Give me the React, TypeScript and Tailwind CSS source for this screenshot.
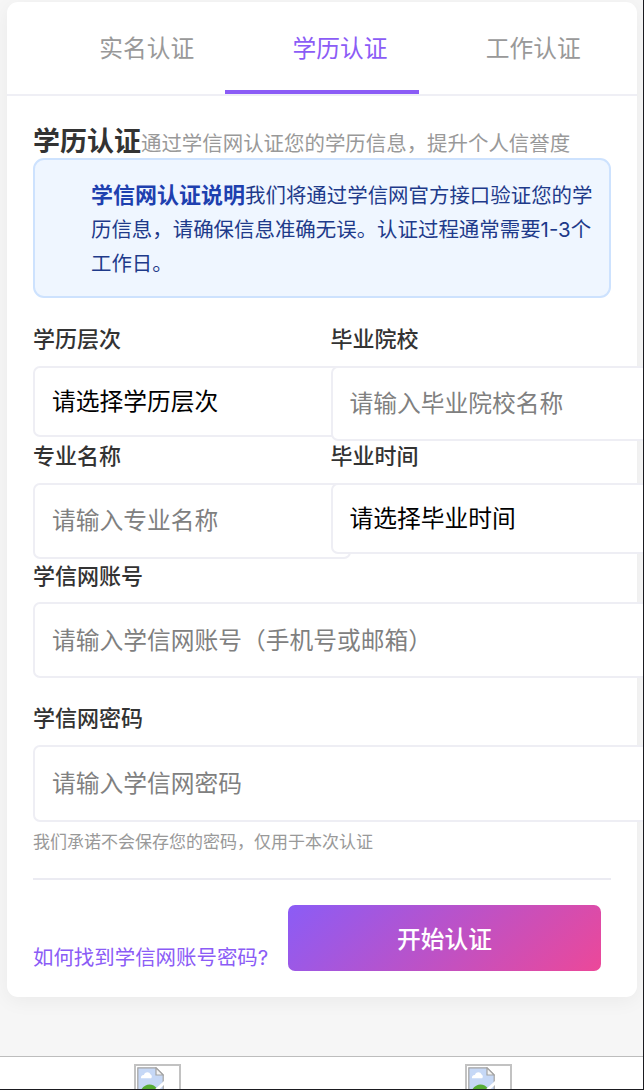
import type { ReactNode } from "react";

type FieldProps = {
  label: string;
  labelClass: string;
  boxClass: string;
  children: ReactNode;
};

const tabs = [
  { label: "实名认证", active: false },
  { label: "学历认证", active: true },
  { label: "工作认证", active: false },
];

const marks = [
  { left: -25, top: 15 },
  { left: 125, top: 275 },
  { left: 275, top: 535 },
  { left: 425, top: 795 },
  { left: 575, top: 1055 },
  { left: -455, top: 955 },
  { left: -305, top: 1215 },
];

function Field({ label, labelClass, boxClass, children }: FieldProps) {
  return (
    <label className="block">
      <span className={`block text-[22px] font-medium text-[#333] ${labelClass}`}>{label}</span>
      <span
        className={`flex items-center rounded-[7px] border-2 border-[#eeeef4] bg-white pl-[17px] text-[23.75px] whitespace-nowrap ${boxClass}`}
      >
        {children}
      </span>
    </label>
  );
}

function BrokenImage() {
  return (
    <div className="h-[47px] w-[47px] shrink-0 border-2 border-[#c2c2c2] pt-px pl-px">
      <svg width="27" height="27" viewBox="0 0 27 27">
        <path d="M.8 .8H19l7.2 7.2V26.2H.8Z" fill="#c6d8f6" stroke="#a3a3a3" strokeWidth="1.2" />
        <path d="M4 11.3a3 3 0 0 1 2.8-3.4 3.6 3.6 0 0 1 6.8-.3 2.7 2.7 0 0 1 .6 3.7Z" fill="#fff" />
        <path d="M3 25.5C6 15.5 18 14 22 25.5Z" fill="#57ad35" />
        <path d="M27 14v4L20.5 24H16Z" fill="#fff" />
        <path d="M19 .8V8h7.2Z" fill="#f4f4f4" stroke="#a3a3a3" strokeWidth="1.2" />
      </svg>
    </div>
  );
}

function Watermark() {
  return (
    <div className="pointer-events-none absolute inset-0 overflow-hidden text-[37px] text-black/[0.012]" aria-hidden="true">
      {marks.map((m) => (
        <div
          key={`${m.left}-${m.top}`}
          className="absolute origin-left -rotate-[31deg] leading-[62px] whitespace-nowrap"
          style={{ left: m.left - 20, top: m.top - 12 }}
        >
          <div>王鑫 08</div>
          <div>macodeMacBook-Pro-288</div>
        </div>
      ))}
    </div>
  );
}

export default function App() {
  return (
    <div className="relative flex h-[1090px] w-[644px] flex-col overflow-hidden border-r border-b border-[#1b1b20] bg-[#f6f6f6] pt-[2px] font-['Inter','Noto_Sans_CJK_SC',sans-serif]">
      <main className="ml-[7px] flex h-[995px] w-[630px] shrink-0 flex-col rounded-[11px] bg-white shadow-[0_4px_20px_rgba(0,0,0,0.05)]">
        <nav className="flex h-[94px] shrink-0 border-b-2 border-[#efeff5] px-[25px]">
          {tabs.map((tab) => (
            <div
              key={tab.label}
              className={`flex h-[92px] flex-1 items-center justify-center border-b-4 pt-[5px] pl-[36px] text-[23.75px] ${
                tab.active ? "border-[#8b5cf6] text-[#8b5cf6]" : "border-transparent text-[#999]"
              }`}
            >
              {tab.label}
            </div>
          ))}
        </nav>

        <section className="flex flex-col pl-[26px]">
          <header className="flex h-[62px] items-baseline pt-[26px] leading-[40px] whitespace-nowrap">
            <h1 className="text-[27px] font-bold text-[#333]">学历认证</h1>
            <p className="text-[20.45px] text-[#999]">通过学信网认证您的学历信息，提升个人信誉度</p>
          </header>

          <div className="h-[140px] w-[578px] rounded-[11px] border-2 border-[#cde2fe] bg-[#eff6ff] pt-[18px] pl-[56px] text-[20.45px] leading-[34px] whitespace-nowrap text-[#1e3a8a]">
            <strong className="text-[22px] font-bold text-[#1e40af]">学信网认证说明</strong>
            我们将通过学信网官方接口验证您的学
            <br />
            历信息，请确保信息准确无误。认证过程通常需要1-3个
            <br />
            工作日。
          </div>

          <div className="grid h-[117px] grid-cols-[297.5px_298px] pt-[23px]">
            <Field label="学历层次" labelClass="h-[45px] leading-[37px]" boxClass="h-[71px] w-[318px] pt-px text-black">
              请选择学历层次
            </Field>
            <Field label="毕业院校" labelClass="h-[45px] leading-[37px]" boxClass="relative h-[75px] w-[318px] pt-px text-[#808080]">
              请输入毕业院校名称
            </Field>
          </div>
          <div className="grid h-[143px] grid-cols-[297.5px_298px] pt-[23px]">
            <Field label="专业名称" labelClass="h-[45px] leading-[37px]" boxClass="h-[76px] w-[318px] text-[#808080]">
              请输入专业名称
            </Field>
            <Field label="毕业时间" labelClass="h-[45px] leading-[37px]" boxClass="relative h-[71px] w-[318px] pt-px text-black">
              请选择毕业时间
            </Field>
          </div>

          <Field label="学信网账号" labelClass="h-[44px] leading-[36px]" boxClass="h-[76px] w-[620px] pt-px text-[#808080]">
            请输入学信网账号（手机号或邮箱）
          </Field>
          <div className="h-[22px]" />
          <Field label="学信网密码" labelClass="h-[45px] leading-[36px]" boxClass="h-[77px] w-[620px] text-[#808080]">
            请输入学信网密码
          </Field>
          <p className="h-[56px] pt-[5px] text-[17px] leading-[30px] text-[#999]">我们承诺不会保存您的密码，仅用于本次认证</p>

          <footer className="flex w-[578px] items-end border-t-2 border-[#ebebf2] pt-[25px]">
            <a className="w-[255px] text-[20.45px] leading-[26px] whitespace-nowrap text-[#8b5cf6]">如何找到学信网账号密码?</a>
            <button className="h-[66px] w-[313px] shrink-0 rounded-[7px] bg-[linear-gradient(135deg,#8b5cf6,#ec4899)] pt-[3px] text-[23.75px] font-medium text-white">
              开始认证
            </button>
          </footer>
        </section>
      </main>

      <div className="mt-[59px] flex h-[60px] shrink-0 gap-[284px] border-t border-[#bdbdbd] bg-white pt-[7px] pl-[134px]">
        <BrokenImage />
        <BrokenImage />
      </div>
      <Watermark />
    </div>
  );
}
